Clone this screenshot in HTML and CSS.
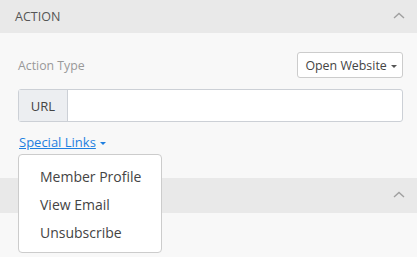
FILE: index.html
```html
<!DOCTYPE html>
<html lang="en">
<head>
  <meta charset="UTF-8">
  <title>Action</title>
  <link rel="stylesheet" href="styles.css">
</head>
<body>

  <div class="panel-header">
    <span class="panel-title">Action</span>
    <svg class="chevron" width="12" height="7" viewBox="0 0 12 7"><polyline points="1,6 6,1.5 11,6" fill="none" stroke="#a0a0a0" stroke-width="1.4"/></svg>
  </div>

  <div class="panel-body">
    <div class="field-row">
      <span class="field-label">Action Type</span>
      <button class="btn-select">Open Website <span class="caret"></span></button>
    </div>

    <div class="input-group">
      <span class="addon">URL</span>
      <input class="url-input" type="text">
    </div>

    <div class="links">
      <a href="#" class="links-toggle">Special Links</a><span class="caret caret-blue"></span>
      <ul class="dropdown">
        <li>Member Profile</li>
        <li>View Email</li>
        <li>Unsubscribe</li>
      </ul>
    </div>
  </div>

  <div class="panel-header panel-header-tall">
    <span class="panel-title"></span>
    <svg class="chevron" width="12" height="7" viewBox="0 0 12 7"><polyline points="1,6 6,1.5 11,6" fill="none" stroke="#a0a0a0" stroke-width="1.4"/></svg>
  </div>
  <div class="panel-rest"></div>

</body>
</html>
```

FILE: styles.css
```css
body {
  margin: 0;
  padding: 0;
  background: #f8f8f8;
  font-family: 'Open Sans', sans-serif;
  color: #555;
  overflow: hidden;
}

.panel-header {
  height: 33px;
  background: #e9e9e9;
  display: flex;
  align-items: center;
  justify-content: space-between;
  padding: 0 12px 0 15px;
}

.panel-header-tall {
  height: 35px;
}

.panel-title {
  font-size: 12.5px;
  text-transform: uppercase;
  color: #555;
}

.chevron {
  display: block;
  margin-top: -2px;
}

.panel-body {
  padding: 19px 14px 26px 18px;
}

.field-row {
  display: flex;
  align-items: center;
  justify-content: space-between;
}

.field-label {
  font-size: 12.3px;
  color: #999;
}

.btn-select {
  height: 26px;
  padding: 0 5px 0 7px;
  background: #fff;
  border: 1px solid #ccc;
  border-radius: 3px;
  font-family: 'Open Sans', sans-serif;
  font-size: 12.4px;
  color: #444;
}

.caret {
  display: inline-block;
  width: 0;
  height: 0;
  border-left: 3px solid transparent;
  border-right: 3px solid transparent;
  border-top: 3px solid #555;
  vertical-align: middle;
  margin-left: 1px;
}

.input-group {
  display: flex;
  height: 33px;
  margin-top: 11px;
  border: 1px solid #ccd0d6;
  border-radius: 3px;
  background: #fff;
  box-sizing: border-box;
}

.addon {
  width: 48px;
  display: flex;
  align-items: center;
  justify-content: center;
  background: #eceef1;
  border-right: 1px solid #ccd0d6;
  font-size: 13px;
  color: #444;
}

.url-input {
  flex: 1;
  border: none;
  outline: none;
  background: transparent;
}

.links {
  position: relative;
  margin-top: 10px;
  font-size: 13px;
  line-height: 20px;
}

.links-toggle {
  color: #1e7fe0;
  margin-left: 1px;
}

.caret-blue {
  border-top-color: #1e7fe0;
  margin-left: 4px;
}

.dropdown {
  position: absolute;
  top: 22px;
  left: 0;
  width: 144px;
  margin: 0;
  padding: 8px 0 5px;
  list-style: none;
  background: #fff;
  border: 1px solid #ccc;
  border-radius: 4px;
  box-sizing: border-box;
  z-index: 2;
}

.dropdown li {
  padding-left: 21px;
  line-height: 28px;
  font-size: 14px;
  color: #444;
}

.panel-rest {
  height: 44px;
}
```
